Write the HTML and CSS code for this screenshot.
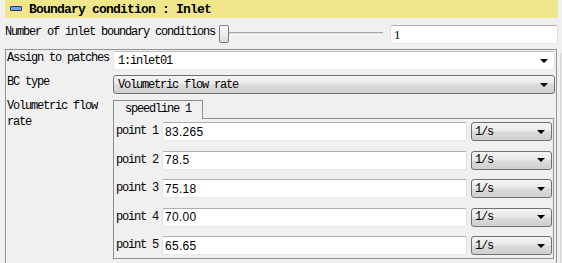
FILE: index.html
```html
<!DOCTYPE html>
<html lang="en">
<head>
  <meta charset="UTF-8">
  <title>Boundary condition : Inlet</title>
  <link rel="stylesheet" href="styles.css">
</head>
<body>
  <div class="page">
    <div class="header">
      <span class="hdr-icon"></span>
      <span class="hdr-title">Boundary condition : Inlet</span>
    </div>

    <div class="count-row">
      <span class="count-label">Number of inlet boundary conditions</span>
      <div class="slider">
        <span class="slider-handle"></span>
        <span class="slider-track"></span>
      </div>
      <input class="spin" type="text" value="1">
    </div>

    <div class="scroll-area">
      <div class="frame">
        <div class="form-grid">
          <label class="form-label">Assign to patches</label>
          <div class="combo combo-edit"><span>1:inlet01</span><span class="arrow"></span></div>

          <label class="form-label">BC type</label>
          <div class="combo"><span>Volumetric flow rate</span><span class="arrow"></span></div>

          <label class="form-label">Volumetric flow<br>rate</label>
          <div class="tabs">
            <div class="tab">speedline 1</div>
            <div class="pane">
              <div class="point-row">
                <span class="point-label">point 1</span>
                <input class="value" type="text" value="83.265">
                <div class="combo unit"><span>1/s</span><span class="arrow"></span></div>
              </div>
              <div class="point-row">
                <span class="point-label">point 2</span>
                <input class="value" type="text" value="78.5">
                <div class="combo unit"><span>1/s</span><span class="arrow"></span></div>
              </div>
              <div class="point-row">
                <span class="point-label">point 3</span>
                <input class="value" type="text" value="75.18">
                <div class="combo unit"><span>1/s</span><span class="arrow"></span></div>
              </div>
              <div class="point-row">
                <span class="point-label">point 4</span>
                <input class="value" type="text" value="70.00">
                <div class="combo unit"><span>1/s</span><span class="arrow"></span></div>
              </div>
              <div class="point-row">
                <span class="point-label">point 5</span>
                <input class="value" type="text" value="65.65">
                <div class="combo unit"><span>1/s</span><span class="arrow"></span></div>
              </div>
            </div>
          </div>
        </div>
      </div>
      <div class="vscroll"></div>
    </div>
  </div>
</body>
</html>
```

FILE: styles.css
```css
html, body {
  margin: 0;
  padding: 0;
}
body {
  background: #f0f0f0;
  width: 562px;
  height: 263px;
  overflow: hidden;
  font-family: "Liberation Mono", "DejaVu Sans Mono", monospace;
  font-size: 12px;
  letter-spacing: -1.2px;
  color: #000;
}
.page {
  padding-left: 5px;
}
.header {
  display: flex;
  align-items: center;
  height: 18px;
  margin-right: 4px;
  background: #f0e68c;
}
.hdr-icon {
  width: 10px;
  height: 3px;
  margin-left: 5px;
  margin-top: -2px;
  background: #7d9be0;
  border: 1px solid #1c3479;
  border-radius: 1px;
}
.hdr-title {
  margin-left: 7px;
  font-size: 13px;
  font-weight: bold;
  letter-spacing: -0.8px;
}
.count-row {
  display: flex;
  align-items: flex-start;
  height: 31px;
  box-sizing: border-box;
  padding-top: 6px;
  margin-right: 4px;
}
.count-label {
  width: 210px;
  line-height: 16px;
  white-space: nowrap;
}
.slider {
  display: flex;
  align-items: flex-start;
  width: 166px;
  margin-left: 4px;
  margin-top: 1px;
}
.slider-handle {
  width: 8px;
  height: 16px;
  border: 1px solid #7a7a7a;
  border-radius: 2px;
  background: linear-gradient(#fdfdfd, #ececec 50%, #dcdcdc);
}
.slider-track {
  flex: 1;
  height: 1px;
  margin-top: 7px;
  border-top: 1px solid #a9a9a9;
  border-bottom: 1px solid #fff;
  background: #d8d8d8;
}
.spin {
  flex: 1;
  height: 19px;
  box-sizing: border-box;
  margin: 1px 0 0 7px;
  padding: 0 3px;
  border: 1px solid;
  border-color: #abadb3 #dbdfe6 #e3e9ef #e2e3ea;
  border-radius: 2px;
  background: #fff;
  font-family: "Liberation Serif", serif;
  font-size: 13px;
  letter-spacing: 0;
  outline: none;
}
.scroll-area {
  display: flex;
}
.frame {
  width: 552px;
  height: 220px;
  box-sizing: border-box;
  border: 1px solid #949494;
  border-bottom: none;
  padding: 1px 0 0 1px;
}
.vscroll {
  flex: 1;
  margin: 4px 0 0 3px;
  border-left: 1px solid #d6d6d6;
  background: #e8e8e8;
}
.form-grid {
  display: grid;
  grid-template-columns: 106px 442px;
  row-gap: 5px;
}
.form-label {
  line-height: 16px;
  margin-top: -1px;
  white-space: nowrap;
}
.combo {
  display: flex;
  align-items: center;
  height: 19px;
  box-sizing: border-box;
  padding-left: 4px;
  border: 1px solid #707070;
  border-radius: 3px;
  background: linear-gradient(#f4f4f4, #e9e9e9 45%, #dadada 55%, #cfcfcf);
  white-space: nowrap;
}
.combo-edit {
  background: #fff;
  border-color: #b9bdc3 #dfe3e8 #e3e9ef #dfe3e8;
  border-radius: 2px;
}
.arrow {
  margin-left: auto;
  margin-right: 6px;
  border-left: 4px solid transparent;
  border-right: 4px solid transparent;
  border-top: 4px solid #000;
}
.tabs {
  width: 441px;
  margin-top: 1px;
}
.tab {
  position: relative;
  z-index: 1;
  width: 90px;
  height: 19px;
  box-sizing: border-box;
  margin-bottom: -1px;
  border: 1px solid #8e8f8f;
  border-bottom: none;
  background: #f0f0f0;
  line-height: 17px;
  text-align: center;
}
.pane {
  display: flex;
  flex-direction: column;
  gap: 9.5px;
  padding: 3px 1px 3px 1px;
  border: 1px solid #8e8f8f;
}
.point-row {
  display: flex;
  align-items: center;
  height: 19px;
}
.point-label {
  width: 46px;
  padding-left: 1px;
  line-height: 19px;
  white-space: nowrap;
}
.value {
  flex: 1;
  min-width: 0;
  height: 19px;
  box-sizing: border-box;
  margin: 0;
  padding: 0 2px;
  border: 1px solid;
  border-color: #abadb3 #dbdfe6 #e3e9ef #e2e3ea;
  border-radius: 2px;
  background: #fff;
  font-family: "Liberation Sans", Arial, sans-serif;
  font-size: 12px;
  letter-spacing: 0.3px;
  outline: none;
}
.unit {
  width: 81px;
  margin-left: 4px;
  padding-left: 3px;
}
```
